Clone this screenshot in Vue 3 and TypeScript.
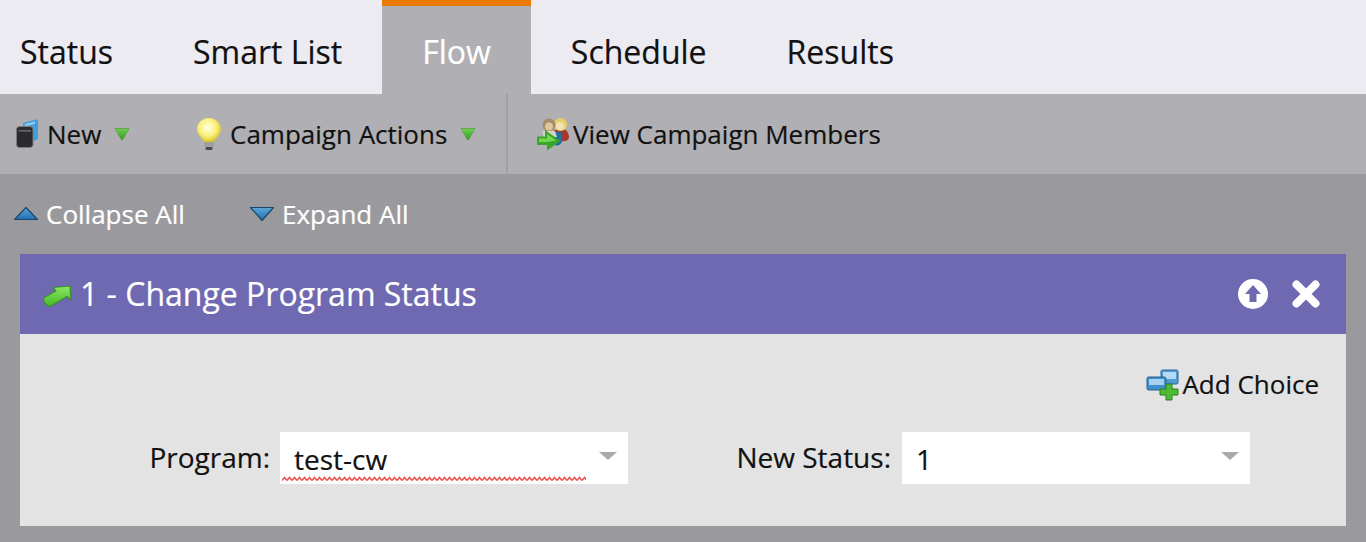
<script setup lang="ts">
const tabs: { label: string; active?: boolean }[] = [
  { label: 'Status' },
  { label: 'Smart List' },
  { label: 'Flow', active: true },
  { label: 'Schedule' },
  { label: 'Results' },
]
</script>

<template>
  <div class="page">
    <nav class="tabs">
      <div v-for="t in tabs" :key="t.label" class="tab" :class="{ active: t.active }">{{ t.label }}</div>
    </nav>

    <div class="toolbar">
      <div class="tool tool-new">
        <svg class="ic" width="26" height="30" viewBox="0 0 26 30">
          <path d="M8 4 L21 0.5 Q23 0 23 2.5 V20 L18 22 V8 H8 Z" fill="#3f9fdc" />
          <path d="M10 5 L20 2.5 V5 L10 7 Z" fill="#93cdf0" />
          <rect x="1.5" y="7.5" width="16.5" height="21" rx="3" fill="#2b2b2d" stroke="#7b7a7e" stroke-width="1" />
          <rect x="3.5" y="11" width="12.5" height="1.6" fill="#69696c" />
        </svg>
        <span class="lbl">New</span>
        <svg class="caret" width="16" height="14" viewBox="0 0 16 14">
          <defs>
            <linearGradient id="gc" x1="0" y1="0" x2="0" y2="1">
              <stop offset="0" stop-color="#6fd04e" />
              <stop offset="1" stop-color="#2f9a28" />
            </linearGradient>
          </defs>
          <path d="M1 1.5 H15 L8.5 13 H7.5 Z" fill="url(#gc)" stroke="#5c9e4c" stroke-width="0.8" stroke-linejoin="round" />
        </svg>
      </div>
      <div class="tool tool-camp">
        <svg class="ic" width="26" height="34" viewBox="0 0 26 34">
          <defs>
            <radialGradient id="bulb" cx="0.45" cy="0.4" r="0.6">
              <stop offset="0" stop-color="#fffee8" />
              <stop offset="0.6" stop-color="#f9f17a" />
              <stop offset="1" stop-color="#d8c42a" />
            </radialGradient>
          </defs>
          <path d="M13 1 C6 1 1 6 1 12 C1 17 5 19 8 25 H18 C21 19 25 17 25 12 C25 6 20 1 13 1 Z" fill="url(#bulb)" />
          <rect x="8" y="25" width="10" height="5" rx="1" fill="#a0a0a3" />
          <rect x="9.5" y="30" width="7" height="3" rx="1" fill="#4d4d50" />
        </svg>
        <span class="lbl">Campaign Actions</span>
        <svg class="caret" width="16" height="14" viewBox="0 0 16 14">
          <path d="M1 1.5 H15 L8.5 13 H7.5 Z" fill="url(#gc)" stroke="#5c9e4c" stroke-width="0.8" stroke-linejoin="round" />
        </svg>
      </div>
      <div class="sep"></div>
      <div class="tool tool-view">
        <svg class="ic" width="34" height="34" viewBox="0 0 34 34">
          <path d="M18 13 H30 Q33 16 33 21 Q31 25 26 24 L18 18 Z" fill="#a8382c" />
          <path d="M12 15 H25 Q27 20 26 25 Q23 30 19 28 L10 20 Z" fill="#1f6fa8" />
          <circle cx="24.5" cy="7.5" r="6.5" fill="#e8cf6a" />
          <circle cx="24" cy="9" r="4" fill="#f3e2b4" />
          <circle cx="13" cy="8" r="6.5" fill="#a58c66" />
          <circle cx="13" cy="9.5" r="4" fill="#e2c59a" />
          <path d="M6 14 H19 L21 20 H8 Z" fill="#d7d3c7" />
          <path d="M1 19.5 H9 V13 L24.5 24 L11 33.5 V28 H1 Z" fill="#3aa62a" />
          <path d="M3 21.5 H11 V17 L20 23.5 L11 25 H3 Z" fill="#6fd84f" />
        </svg>
        <span class="lbl">View Campaign Members</span>
      </div>
    </div>

    <div class="content">
      <div class="collapse-row">
        <div class="cx cx-collapse">
          <svg width="26" height="16" viewBox="0 0 26 16">
            <defs>
              <linearGradient id="tri" x1="0" y1="0" x2="0" y2="1">
                <stop offset="0" stop-color="#5ea5da" />
                <stop offset="1" stop-color="#1f6fb0" />
              </linearGradient>
            </defs>
            <path d="M13 1.5 L24.5 13.5 H1.5 Z" fill="url(#tri)" stroke="#1c4668" stroke-width="1.2" stroke-linejoin="round" />
          </svg>
          <span>Collapse All</span>
        </div>
        <div class="cx cx-expand">
          <svg width="26" height="16" viewBox="0 0 26 16">
            <path d="M1.5 1.5 H24.5 L13 14.5 Z" fill="url(#tri)" stroke="#1c4668" stroke-width="1.2" stroke-linejoin="round" />
          </svg>
          <span>Expand All</span>
        </div>
      </div>

      <section class="card">
        <header class="card-head">
          <svg class="arrow" width="30" height="24" viewBox="0 0 30 24">
            <defs>
              <linearGradient id="ga" x1="0" y1="0" x2="0" y2="1">
                <stop offset="0" stop-color="#8ce85e" />
                <stop offset="1" stop-color="#46b82c" />
              </linearGradient>
            </defs>
            <path d="M1.5 16 Q1.5 14 3 13 L14 7 L11 3.5 L28 2 L29 16 L25 12.5 L9 22 Q4 23.5 1.5 16 Z" fill="url(#ga)" stroke="#3b8f2a" stroke-width="1.2" stroke-linejoin="round" />
          </svg>
          <h2 class="title">1 - Change Program Status</h2>
          <div class="head-actions">
            <svg width="32" height="32" viewBox="0 0 32 32">
              <circle cx="16" cy="16" r="15" fill="#fff" />
              <path d="M16 7 L24 16 H19.5 V24 H12.5 V16 H8 Z" fill="#6e69b0" />
            </svg>
            <svg width="32" height="32" viewBox="0 0 32 32">
              <path d="M6.5 6.5 L25.5 25.5 M25.5 6.5 L6.5 25.5" stroke="#fff" stroke-width="8" stroke-linecap="round" />
            </svg>
          </div>
        </header>
        <div class="card-body">
          <div class="choice-row">
            <svg width="34" height="32" viewBox="0 0 34 32">
              <rect x="15" y="1" width="17" height="14" rx="1.5" fill="#4f9bd4" stroke="#2d6896" />
              <rect x="17" y="3" width="13" height="7" fill="#b4dbf3" />
              <rect x="1" y="8" width="19" height="13" rx="1.5" fill="#3f8fcc" stroke="#2d5f88" />
              <rect x="3" y="10" width="15" height="6" fill="#a5d1ef" />
              <path d="M20 15 H26 V20 H32 V26 H26 V31 H20 V26 H14 V20 H20 Z" fill="#4cbb33" stroke="#2f7f20" />
            </svg>
            <span class="add">Add Choice</span>
          </div>
          <div class="fields">
            <label class="f-label l-program">Program:</label>
            <div class="select">
              <span class="val">test-cw</span>
              <i class="drop"></i>
              <svg class="wave" width="304" height="6" viewBox="0 0 304 6">
                <defs>
                  <pattern id="wv" width="5" height="6" patternUnits="userSpaceOnUse">
                    <path d="M0 4.5 L2.5 1.5 L5 4.5" fill="none" stroke="#ee4f4f" stroke-width="1.5" />
                  </pattern>
                </defs>
                <rect width="304" height="6" fill="url(#wv)" />
              </svg>
            </div>
            <label class="f-label l-status">New Status:</label>
            <div class="select">
              <span class="val">1</span>
              <i class="drop"></i>
            </div>
          </div>
        </div>
      </section>
    </div>
  </div>
</template>

<style>
html, body { margin: 0; background: #9a999e; }
</style>

<style scoped>
.page {
  width: 1366px;
  height: 542px;
  overflow: hidden;
  font-family: "Open Sans", "Liberation Sans", sans-serif;
  background: #9a999e;
  -webkit-text-stroke: 0.2px currentColor;
}
.tabs {
  height: 94px;
  display: flex;
  background: #ecebf1;
  color: #111;
  font-size: 32px;
}
.tab {
  display: flex;
  align-items: center;
  padding: 8px 40px 0 40px;
  box-sizing: border-box;
}
.tab:first-child { padding-left: 20px; }
.tab.active {
  background: #b0afb4;
  color: #fff;
  border-top: 6px solid #ea7a03;
  padding-top: 2px;
}

.toolbar {
  height: 80px;
  background: #b0afb4;
  display: flex;
  align-items: center;
  color: #111;
  font-size: 26px;
}
.tool { display: flex; align-items: center; }
.lbl { line-height: 1; }
.tool-new { margin-left: 15px; width: 181px; }
.tool-new .ic { margin-right: 6px; }
.tool-new .caret { margin-left: 13px; }
.tool-camp { width: 310px; }
.tool-camp .ic { margin-right: 8px; }
.tool-camp .caret { margin-left: 13px; }
.sep { width: 2px; height: 80px; background: #a09fa4; }
.tool-view { margin-left: 28px; }
.tool-view .ic { margin-right: 3px; }

.content { padding: 0 20px; }
.collapse-row {
  height: 80px;
  display: flex;
  align-items: center;
  color: #fff;
  font-size: 26px;
  margin-left: -7px;
}
.cx { display: flex; align-items: center; gap: 7px; }
.cx-collapse { width: 236px; }

.card { width: 1326px; }
.card-head {
  height: 80px;
  background: #6e69b0;
  display: flex;
  align-items: center;
  color: #fff;
  padding: 0 24px 0 22px;
}
.arrow { margin-right: 8px; margin-top: 4px; }
.title {
  margin: 0 0 2px;
  font-size: 32px;
  font-weight: 400;
  flex: 1;
}
.head-actions { display: flex; gap: 21px; margin-top: 2px; margin-bottom: 2px; }

.card-body {
  height: 192px;
  background: #e3e3e3;
  color: #111;
  box-sizing: border-box;
  padding: 34px 27px 0 0;
}
.choice-row {
  display: flex;
  justify-content: flex-end;
  align-items: center;
  gap: 2px;
  font-size: 26px;
  height: 34px;
}
.add { margin-top: -2px; }
.fields {
  display: flex;
  align-items: center;
  margin-top: 30px;
  font-size: 28px;
}
.f-label { text-align: right; line-height: 52px; margin-top: -2px; }
.l-program { width: 250px; margin-right: 10px; }
.l-status { width: 263px; margin-right: 11px; }
.select {
  position: relative;
  width: 348px;
  height: 52px;
  background: #fff;
  display: flex;
  align-items: center;
  box-sizing: border-box;
}
.val { padding-left: 14px; padding-top: 1px; }
.drop {
  position: absolute;
  right: 11px;
  top: 20px;
  width: 0;
  height: 0;
  border-left: 9px solid transparent;
  border-right: 9px solid transparent;
  border-top: 8px solid #aaa;
}
.wave { position: absolute; left: 2px; bottom: 2px; }
</style>
